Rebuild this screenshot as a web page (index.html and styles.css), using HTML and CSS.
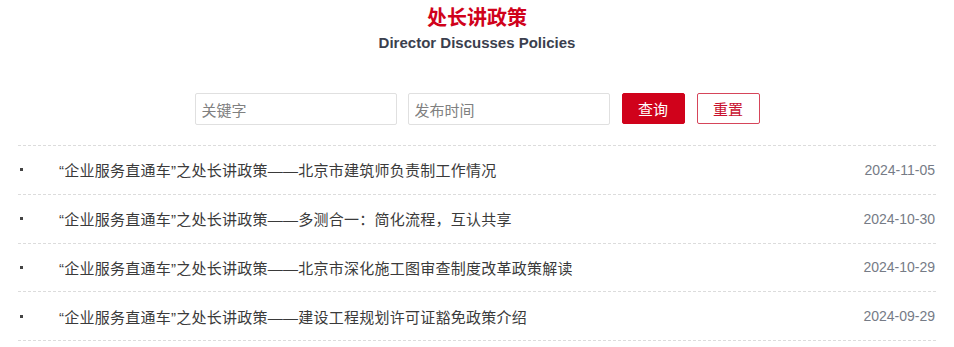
FILE: index.html
```html
<!DOCTYPE html>
<html>
<head>
  <meta charset="utf-8">
  <title>处长讲政策</title>
  <link rel="stylesheet" href="styles.css">
</head>
<body>

  <div class="container">
    <div class="header">
      <h2>处长讲政策</h2>
      <h3>Director Discusses Policies</h3>
    </div>

    <div class="search">
      <input type="text" placeholder="关键字">
      <input type="text" placeholder="发布时间">
      <button class="btn-query">查询</button>
      <button class="btn-reset">重置</button>
    </div>

    <ul class="news-list">
      <li>
        <span class="dot"></span>
        <a href="#">“企业服务直通车”之处长讲政策——北京市建筑师负责制工作情况</a>
        <span class="date">2024-11-05</span>
      </li>
      <li>
        <span class="dot"></span>
        <a href="#">“企业服务直通车”之处长讲政策——多测合一：简化流程，互认共享</a>
        <span class="date">2024-10-30</span>
      </li>
      <li>
        <span class="dot"></span>
        <a href="#">“企业服务直通车”之处长讲政策——北京市深化施工图审查制度改革政策解读</a>
        <span class="date">2024-10-29</span>
      </li>
      <li>
        <span class="dot"></span>
        <a href="#">“企业服务直通车”之处长讲政策——建设工程规划许可证豁免政策介绍</a>
        <span class="date">2024-09-29</span>
      </li>
    </ul>
  </div>

</body>
</html>
```

FILE: styles.css
```css
body {
  font-family: "Noto Sans CJK SC", "Liberation Sans", sans-serif;
  background-color: #fff;
  margin: 0;
  padding: 0;
  color: #333;
}

.container {
  width: 918px;
  margin: 0 auto;
}

.header {
  text-align: center;
  padding-top: 5px;
}

.header h2 {
  margin: 0;
  font-size: 20px;
  line-height: 24px;
  font-weight: bold;
  color: #d0021b;
}

.header h3 {
  margin: 4px 0 0;
  font-family: "Liberation Sans", Arial, sans-serif;
  font-size: 15px;
  line-height: 20px;
  font-weight: bold;
  color: #3b3f4e;
}

.search {
  display: flex;
  justify-content: center;
  margin-top: 40px;
}

.search input {
  width: 202px;
  height: 32px;
  padding: 0 6px;
  margin-right: 11px;
  border: 1px solid #e0e0e0;
  border-radius: 2px;
  box-sizing: border-box;
  font-family: inherit;
  font-size: 15px;
  color: #333;
  outline: none;
}

.search input + input {
  margin-right: 12px;
}

.search input::placeholder {
  color: #808080;
}

.search button {
  width: 63px;
  height: 31px;
  border-radius: 2px;
  font-family: inherit;
  font-size: 15px;
  cursor: pointer;
  box-sizing: border-box;
}

.btn-query {
  background-color: #d0021b;
  border: 1px solid #d0021b;
  color: #fff;
  margin-right: 12px;
}

.btn-reset {
  background-color: #fff;
  border: 1px solid #d6455a;
  color: #c8102e;
}

.news-list {
  list-style: none;
  margin: 20px 0 0;
  padding: 0;
}

.news-list li {
  display: flex;
  align-items: center;
  height: 47.8px;
  border-top: 1px dashed #dcdcdc;
}

.news-list li:last-child {
  border-bottom: 1px dashed #dcdcdc;
}

.dot {
  width: 3px;
  height: 3px;
  background-color: #444;
  margin-left: 2px;
  margin-right: 36px;
  flex-shrink: 0;
}

.news-list a {
  flex: 1;
  font-family: "Liberation Sans", "Noto Sans CJK SC", sans-serif;
  font-size: 15px;
  letter-spacing: 0.25px;
  color: #3a3a3a;
  text-decoration: none;
  white-space: nowrap;
}

.date {
  font-family: "Liberation Sans", Arial, sans-serif;
  font-size: 14px;
  color: #767b86;
  margin-right: 1px;
}
```
